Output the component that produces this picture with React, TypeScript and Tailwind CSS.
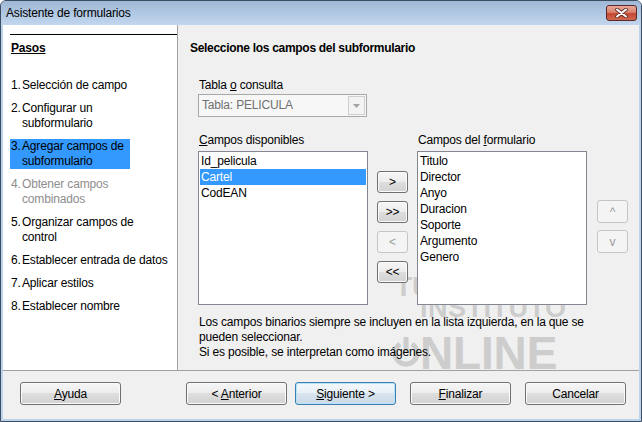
import type { ReactNode } from "react";
import clsx from "clsx";

const font = "font-['Liberation_Sans',Arial,sans-serif] tracking-[-0.17px]";

interface BtnProps {
  children: ReactNode;
  className?: string;
  disabled?: boolean;
  primary?: boolean;
}

function WinButton({ children, className, disabled, primary }: BtnProps) {
  return (
    <div
      className={clsx(
        "flex items-center justify-center rounded-[3px] border text-[12px] leading-none",
        disabled
          ? "border-[#c3c6c9] bg-[#f4f4f4] text-[#9a9a9a]"
          : primary
            ? "border-[#3c7fb1] bg-[linear-gradient(#f4f8fb_0%,#e8f0f6_50%,#d8e4ee_50%,#ccdbe8_100%)] text-black shadow-[inset_0_0_0_1px_#b9e2f8]"
            : "border-[#707070] bg-[linear-gradient(#f6f6f6_0%,#ececec_50%,#dedede_50%,#d2d2d2_100%)] text-black shadow-[inset_0_0_0_1px_#fbfbfb]",
        className,
      )}
    >
      {children}
    </div>
  );
}

const steps: { n: string; lines: string[]; active?: boolean; off?: boolean }[] = [
  { n: "1.", lines: ["Selección de campo"] },
  { n: "2.", lines: ["Configurar un", "subformulario"] },
  { n: "3.", lines: ["Agregar campos de", "subformulario"], active: true },
  { n: "4.", lines: ["Obtener campos", "combinados"], off: true },
  { n: "5.", lines: ["Organizar campos de", "control"] },
  { n: "6.", lines: ["Establecer entrada de datos"] },
  { n: "7.", lines: ["Aplicar estilos"] },
  { n: "8.", lines: ["Establecer nombre"] },
];

const available = ["Id_pelicula", "Cartel", "CodEAN"];
const formFields = ["Titulo", "Director", "Anyo", "Duracion", "Soporte", "Argumento", "Genero"];

// faint watermark that sits behind the page controls
function Watermark() {
  return (
    <div className="pointer-events-none absolute inset-0 font-['Liberation_Sans',Arial,sans-serif] font-bold text-[#cdcdcd]">
      <div className="absolute left-[217px] top-[252px] text-[28px] leading-[20px]">TU</div>
      <div className="absolute left-[242px] top-[273px] text-[27px] leading-[20px] tracking-[0.5px]">INSTITUTO</div>
      <svg className="absolute left-[214px] top-[310px]" width="28" height="34" viewBox="0 0 28 34">
        <path d="M8 9 A11 11 0 1 0 20 9" fill="none" stroke="#cdcdcd" strokeWidth="5" />
        <line x1="14" y1="2" x2="14" y2="17" stroke="#cdcdcd" strokeWidth="5" />
      </svg>
      <div className="absolute left-[242px] top-[311px] text-[46px] leading-[34px]">NLINE</div>
    </div>
  );
}

export default function App() {
  return (
    <div className={clsx("h-[422px] w-[642px] overflow-hidden bg-white", font)}>
      <div className="flex h-full w-full flex-col rounded-t-[6px] border border-[#3b4d62] bg-[#bcd3ec] px-[2px] pb-[2px]">
        {/* title bar */}
        <div className="-mx-[2px] flex h-[24px] shrink-0 items-start justify-between rounded-t-[5px] bg-[linear-gradient(#9fb8d6,#c2d7ee)] pl-[5px] pr-[4px]">
          <span className="mt-[5px] text-[12px] leading-[15px] text-black">Asistente de formularios</span>
          <div className="mt-[4px] flex h-[16px] w-[31px] items-center justify-center rounded-[3px] border border-[#5b2a26] bg-[linear-gradient(#eaa899_0%,#d9826f_45%,#c4472f_55%,#d06a51_100%)]">
            <svg width="13" height="10" viewBox="0 0 13 10">
              <path d="M2 1.5 L11 8.5 M11 1.5 L2 8.5" stroke="#5a2b25" strokeWidth="3.6" strokeLinecap="round" />
              <path d="M2 1.5 L11 8.5 M11 1.5 L2 8.5" stroke="#ffffff" strokeWidth="2" strokeLinecap="round" />
            </svg>
          </div>
        </div>

        {/* main */}
        <div className="flex h-[345px] shrink-0">
          {/* steps pane */}
          <div className="w-[175px] shrink-0 border-r border-[#a0a0a0] bg-white">
            <div className="ml-[7px] mt-[9px] h-px bg-black" />
            <div className="ml-[8px] mt-[6px] text-[12px] font-bold leading-[15px] underline">Pasos</div>
            <div className="mt-[22px] flex flex-col gap-[8px] pl-[7px]">
              {steps.map((s) => (
                <div
                  key={s.n}
                  className={clsx(
                    "flex pl-px text-[12px] leading-[15px]",
                    s.active && "w-[120px] bg-[#3399ff]",
                    s.off ? "text-[#8d8d8d]" : "text-black",
                  )}
                >
                  <span className="w-[11px] shrink-0">{s.n}</span>
                  <span className="whitespace-nowrap">
                    {s.lines.map((l, i) => (
                      <div key={i}>{l}</div>
                    ))}
                  </span>
                </div>
              ))}
            </div>
          </div>

          {/* page pane */}
          <div className="relative flex-1 bg-[#f0f0f0] text-[12px] leading-[15px] text-black">
            <Watermark />
            <div className="relative pl-[12px] pt-[16px]">
              <div className="font-bold tracking-[-0.3px]">Seleccione los campos del subformulario</div>
              <div className="pl-[8px]">
                <div className="mt-[22px] pl-px">
                  Tabla <u>o</u> consulta
                </div>
                <div className="mt-[1px] flex h-[23px] w-[169px] items-center justify-between border border-[#a8a8a8] bg-[#f7f7f7] pl-[3px] pr-px">
                  <span className="text-[#707070]">Tabla: PELICULA</span>
                  <div className="flex h-[19px] w-[17px] items-center justify-center border border-[#cfcfcf] bg-[#f3f3f3]">
                    <svg width="7" height="4" viewBox="0 0 7 4">
                      <path d="M0 0 H7 L3.5 4 Z" fill="#a3a3a3" />
                    </svg>
                  </div>
                </div>

                <div className="mt-[16px] flex">
                  <div className="w-[170px]">
                    <div className="pl-px">
                      <u>C</u>ampos disponibles
                    </div>
                    <div className="mt-[3px] h-[154px] border border-[#828790] bg-white p-px">
                      {available.map((f) => (
                        <div
                          key={f}
                          className={clsx("h-[16px] pl-px leading-[16px]", f === "Cartel" && "bg-[#3399ff] text-white")}
                        >
                          {f}
                        </div>
                      ))}
                    </div>
                  </div>

                  <div className="ml-[9px] flex w-[31px] flex-col gap-[8px] pt-[38px]">
                    <WinButton className="h-[22px]">&gt;</WinButton>
                    <WinButton className="h-[22px]">&gt;&gt;</WinButton>
                    <WinButton className="h-[22px]" disabled>
                      &lt;
                    </WinButton>
                    <WinButton className="h-[22px]">&lt;&lt;</WinButton>
                  </div>

                  <div className="ml-[9px] w-[170px]">
                    <div className="pl-px">
                      Campos del <u>f</u>ormulario
                    </div>
                    <div className="mt-[3px] h-[154px] border border-[#828790] bg-white p-px">
                      {formFields.map((f) => (
                        <div key={f} className="h-[16px] pl-px leading-[16px]">
                          {f}
                        </div>
                      ))}
                    </div>
                  </div>

                  <div className="ml-[10px] flex w-[31px] flex-col gap-[7px] pt-[67px]">
                    <WinButton className="h-[23px] text-[11px]" disabled>
                      ^
                    </WinButton>
                    <WinButton className="h-[23px] text-[11px]" disabled>
                      v
                    </WinButton>
                  </div>
                </div>

                <div className="mt-[10px] whitespace-nowrap pl-px">
                  Los campos binarios siempre se incluyen en la lista izquierda, en la que se
                  <br />
                  pueden seleccionar.
                  <br />
                  Si es posible, se interpretan como imágenes.
                </div>
              </div>
            </div>
          </div>
        </div>

        {/* footer */}
        <div className="flex h-[49px] shrink-0 items-start border-t border-[#a0a0a0] bg-[#f0f0f0] pl-[17px] pt-[11px]">
          <WinButton className="h-[23px] w-[101px]">
            <span>
              <u>A</u>yuda
            </span>
          </WinButton>
          <WinButton className="ml-[65px] h-[23px] w-[101px]">
            <span>
              &lt; <u>A</u>nterior
            </span>
          </WinButton>
          <WinButton primary className="ml-[8px] h-[23px] w-[101px]">
            <span>
              <u>S</u>iguiente &gt;
            </span>
          </WinButton>
          <WinButton className="ml-[14px] h-[23px] w-[101px]">
            <span>
              <u>F</u>inalizar
            </span>
          </WinButton>
          <WinButton className="ml-[14px] h-[23px] w-[101px]">Cancelar</WinButton>
        </div>
      </div>
    </div>
  );
}
